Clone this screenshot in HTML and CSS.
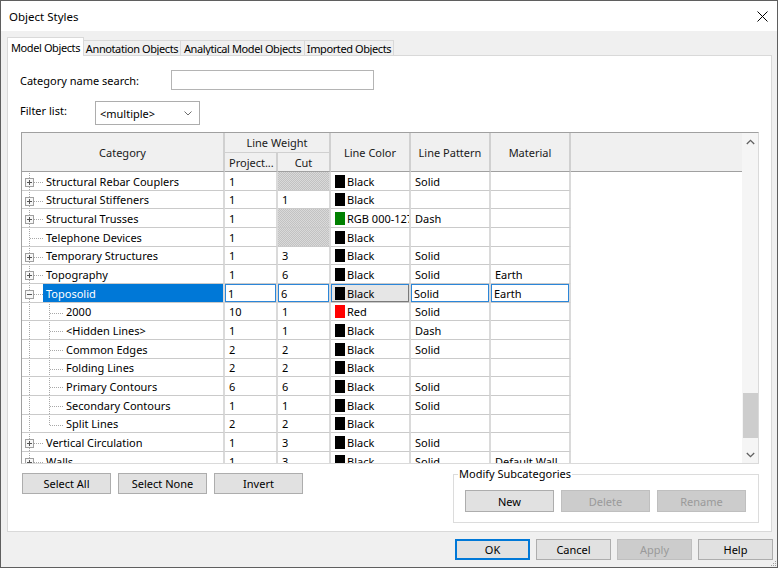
FILE: index.html
```html
<!DOCTYPE html>
<html>
<head>
<meta charset="utf-8">
<title>Object Styles</title>
<link rel="stylesheet" href="styles.css">
</head>
<body>
<div class="window">
  <div class="titlebar">
    <span class="title">Object Styles</span>
    <svg class="close" width="11" height="11" viewBox="0 0 11 11"><path d="M0.5 0.5L10.5 10.5M10.5 0.5L0.5 10.5" stroke="#000" stroke-width="1"/></svg>
  </div>
  <div class="tabs">
    <div class="tab active t1">Model Objects</div>
    <div class="tab t2">Annotation Objects</div>
    <div class="tab t3">Analytical Model Objects</div>
    <div class="tab t4">Imported Objects</div>
  </div>
  <div class="panel">
    <div class="frow search-row">
      <label class="lbl lbl-search">Category name search:</label>
      <div class="input"></div>
    </div>
    <div class="frow filter-row">
      <label class="lbl lbl-filter">Filter list:</label>
      <div class="select"><span>&lt;multiple&gt;</span><svg width="8" height="5" viewBox="0 0 8 5"><path d="M0.5 0.5L4 4L7.5 0.5" fill="none" stroke="#6d6d6d"/></svg></div>
    </div>
    <div class="grid">
      <div class="gmain">
        <div class="ghead">
          <div class="hc hc-cat">Category</div>
          <div class="hc hc-lw">Line Weight</div>
          <div class="hc hc-color">Line Color</div>
          <div class="hc hc-pat">Line Pattern</div>
          <div class="hc hc-mat">Material</div>
          <div class="hc hc-fill"></div>
          <div class="hc hc-proj">Project...</div>
          <div class="hc hc-cut">Cut</div>
        </div>
        <div class="gbody">
          <div class="row">
            <div class="c c-cat"><svg class="tw" width="21" height="19" viewBox="0 0 21 19"><path d="M7.5 0V19M12 9.5H21" stroke="#a8a8a8" stroke-dasharray="1 1"/><rect x="3.5" y="5.5" width="8" height="8" fill="#f7f7f7" stroke="#a0a0a0"/><path d="M5 9.5H10M7.5 7V12" stroke="#555"/></svg><span class="name">Structural Rebar Couplers</span></div>
            <div class="c">1</div><div class="c hatch"></div>
            <div class="c"><i class="sw"></i>Black</div><div class="c">Solid</div><div class="c"></div><div class="cf"></div>
          </div>
          <div class="row">
            <div class="c c-cat"><svg class="tw" width="21" height="19" viewBox="0 0 21 19"><path d="M7.5 0V19M12 9.5H21" stroke="#a8a8a8" stroke-dasharray="1 1"/><rect x="3.5" y="5.5" width="8" height="8" fill="#f7f7f7" stroke="#a0a0a0"/><path d="M5 9.5H10M7.5 7V12" stroke="#555"/></svg><span class="name">Structural Stiffeners</span></div>
            <div class="c">1</div><div class="c">1</div>
            <div class="c"><i class="sw"></i>Black</div><div class="c"></div><div class="c"></div><div class="cf"></div>
          </div>
          <div class="row">
            <div class="c c-cat"><svg class="tw" width="21" height="19" viewBox="0 0 21 19"><path d="M7.5 0V19M12 9.5H21" stroke="#a8a8a8" stroke-dasharray="1 1"/><rect x="3.5" y="5.5" width="8" height="8" fill="#f7f7f7" stroke="#a0a0a0"/><path d="M5 9.5H10M7.5 7V12" stroke="#555"/></svg><span class="name">Structural Trusses</span></div>
            <div class="c">1</div><div class="c hatch"></div>
            <div class="c"><i class="sw sw-green"></i><span class="clip">RGB 000-127-000</span></div><div class="c">Dash</div><div class="c"></div><div class="cf"></div>
          </div>
          <div class="row">
            <div class="c c-cat"><svg class="tw" width="21" height="19" viewBox="0 0 21 19"><path d="M7.5 0V19M8 9.5H21" stroke="#a8a8a8" stroke-dasharray="1 1"/></svg><span class="name">Telephone Devices</span></div>
            <div class="c">1</div><div class="c hatch"></div>
            <div class="c"><i class="sw"></i>Black</div><div class="c"></div><div class="c"></div><div class="cf"></div>
          </div>
          <div class="row">
            <div class="c c-cat"><svg class="tw" width="21" height="19" viewBox="0 0 21 19"><path d="M7.5 0V19M12 9.5H21" stroke="#a8a8a8" stroke-dasharray="1 1"/><rect x="3.5" y="5.5" width="8" height="8" fill="#f7f7f7" stroke="#a0a0a0"/><path d="M5 9.5H10M7.5 7V12" stroke="#555"/></svg><span class="name">Temporary Structures</span></div>
            <div class="c">1</div><div class="c">3</div>
            <div class="c"><i class="sw"></i>Black</div><div class="c">Solid</div><div class="c"></div><div class="cf"></div>
          </div>
          <div class="row">
            <div class="c c-cat"><svg class="tw" width="21" height="19" viewBox="0 0 21 19"><path d="M7.5 0V19M12 9.5H21" stroke="#a8a8a8" stroke-dasharray="1 1"/><rect x="3.5" y="5.5" width="8" height="8" fill="#f7f7f7" stroke="#a0a0a0"/><path d="M5 9.5H10M7.5 7V12" stroke="#555"/></svg><span class="name">Topography</span></div>
            <div class="c">1</div><div class="c">6</div>
            <div class="c"><i class="sw"></i>Black</div><div class="c">Solid</div><div class="c">Earth</div><div class="cf"></div>
          </div>
          <div class="row sel">
            <div class="c c-cat"><svg class="tw" width="21" height="19" viewBox="0 0 21 19"><path d="M7.5 0V19M12 9.5H21" stroke="#a8a8a8" stroke-dasharray="1 1"/><rect x="3.5" y="5.5" width="8" height="8" fill="#f7f7f7" stroke="#a0a0a0"/><path d="M5 9.5H10" stroke="#555"/></svg><span class="name">Toposolid</span></div>
            <div class="c blue">1</div><div class="c blue">6</div>
            <div class="c cur"><i class="sw"></i>Black</div><div class="c blue">Solid</div><div class="c blue">Earth</div><div class="cf"></div>
          </div>
          <div class="row">
            <div class="c c-cat"><svg class="tw" width="41" height="19" viewBox="0 0 41 19"><path d="M7.5 0V19M27.5 0V19M28 9.5H41" stroke="#a8a8a8" stroke-dasharray="1 1"/></svg><span class="name">2000</span></div>
            <div class="c">10</div><div class="c">1</div>
            <div class="c"><i class="sw sw-red"></i>Red</div><div class="c">Solid</div><div class="c"></div><div class="cf"></div>
          </div>
          <div class="row">
            <div class="c c-cat"><svg class="tw" width="41" height="19" viewBox="0 0 41 19"><path d="M7.5 0V19M27.5 0V19M28 9.5H41" stroke="#a8a8a8" stroke-dasharray="1 1"/></svg><span class="name">&lt;Hidden Lines&gt;</span></div>
            <div class="c">1</div><div class="c">1</div>
            <div class="c"><i class="sw"></i>Black</div><div class="c">Dash</div><div class="c"></div><div class="cf"></div>
          </div>
          <div class="row">
            <div class="c c-cat"><svg class="tw" width="41" height="19" viewBox="0 0 41 19"><path d="M7.5 0V19M27.5 0V19M28 9.5H41" stroke="#a8a8a8" stroke-dasharray="1 1"/></svg><span class="name">Common Edges</span></div>
            <div class="c">2</div><div class="c">2</div>
            <div class="c"><i class="sw"></i>Black</div><div class="c">Solid</div><div class="c"></div><div class="cf"></div>
          </div>
          <div class="row">
            <div class="c c-cat"><svg class="tw" width="41" height="19" viewBox="0 0 41 19"><path d="M7.5 0V19M27.5 0V19M28 9.5H41" stroke="#a8a8a8" stroke-dasharray="1 1"/></svg><span class="name">Folding Lines</span></div>
            <div class="c">2</div><div class="c">2</div>
            <div class="c"><i class="sw"></i>Black</div><div class="c"></div><div class="c"></div><div class="cf"></div>
          </div>
          <div class="row">
            <div class="c c-cat"><svg class="tw" width="41" height="19" viewBox="0 0 41 19"><path d="M7.5 0V19M27.5 0V19M28 9.5H41" stroke="#a8a8a8" stroke-dasharray="1 1"/></svg><span class="name">Primary Contours</span></div>
            <div class="c">6</div><div class="c">6</div>
            <div class="c"><i class="sw"></i>Black</div><div class="c">Solid</div><div class="c"></div><div class="cf"></div>
          </div>
          <div class="row">
            <div class="c c-cat"><svg class="tw" width="41" height="19" viewBox="0 0 41 19"><path d="M7.5 0V19M27.5 0V19M28 9.5H41" stroke="#a8a8a8" stroke-dasharray="1 1"/></svg><span class="name">Secondary Contours</span></div>
            <div class="c">1</div><div class="c">1</div>
            <div class="c"><i class="sw"></i>Black</div><div class="c">Solid</div><div class="c"></div><div class="cf"></div>
          </div>
          <div class="row">
            <div class="c c-cat"><svg class="tw" width="41" height="19" viewBox="0 0 41 19"><path d="M7.5 0V19M27.5 0V9.5M28 9.5H41" stroke="#a8a8a8" stroke-dasharray="1 1"/></svg><span class="name">Split Lines</span></div>
            <div class="c">2</div><div class="c">2</div>
            <div class="c"><i class="sw"></i>Black</div><div class="c"></div><div class="c"></div><div class="cf"></div>
          </div>
          <div class="row">
            <div class="c c-cat"><svg class="tw" width="21" height="19" viewBox="0 0 21 19"><path d="M7.5 0V19M12 9.5H21" stroke="#a8a8a8" stroke-dasharray="1 1"/><rect x="3.5" y="5.5" width="8" height="8" fill="#f7f7f7" stroke="#a0a0a0"/><path d="M5 9.5H10M7.5 7V12" stroke="#555"/></svg><span class="name">Vertical Circulation</span></div>
            <div class="c">1</div><div class="c">3</div>
            <div class="c"><i class="sw"></i>Black</div><div class="c">Solid</div><div class="c"></div><div class="cf"></div>
          </div>
          <div class="row">
            <div class="c c-cat"><svg class="tw" width="21" height="19" viewBox="0 0 21 19"><path d="M7.5 0V19M12 9.5H21" stroke="#a8a8a8" stroke-dasharray="1 1"/><rect x="3.5" y="5.5" width="8" height="8" fill="#f7f7f7" stroke="#a0a0a0"/><path d="M5 9.5H10M7.5 7V12" stroke="#555"/></svg><span class="name">Walls</span></div>
            <div class="c">1</div><div class="c">3</div>
            <div class="c"><i class="sw"></i>Black</div><div class="c">Solid</div><div class="c">Default Wall</div><div class="cf"></div>
          </div>
        </div>
      </div>
      <div class="vscroll">
        <div class="sbtn"><svg width="9" height="6" viewBox="0 0 9 6"><path d="M0.8 5L4.5 1.3L8.2 5" fill="none" stroke="#606060" stroke-width="1.3"/></svg></div>
        <div class="strack"><div class="thumb"></div></div>
        <div class="sbtn"><svg width="9" height="6" viewBox="0 0 9 6"><path d="M0.8 1L4.5 4.7L8.2 1" fill="none" stroke="#606060" stroke-width="1.3"/></svg></div>
      </div>
    </div>
    <div class="lower">
      <div class="selbtns">
        <button class="btn">Select All</button>
        <button class="btn">Select None</button>
        <button class="btn">Invert</button>
      </div>
      <fieldset class="modify">
        <legend>Modify Subcategories</legend>
        <div class="modbtns">
          <button class="btn btn-sub">New</button>
          <button class="btn btn-sub" disabled>Delete</button>
          <button class="btn btn-sub" disabled>Rename</button>
        </div>
      </fieldset>
    </div>
  </div>
  <div class="footer">
    <button class="btn fbtn ok">OK</button>
    <button class="btn fbtn">Cancel</button>
    <button class="btn fbtn" disabled>Apply</button>
    <button class="btn fbtn">Help</button>
  </div>
  <svg class="grip" width="7" height="7" viewBox="0 0 7 7"><rect x="5" y="1" width="1" height="1" fill="#a0a0a0"/><rect x="3" y="3" width="1" height="1" fill="#a0a0a0"/><rect x="5" y="3" width="1" height="1" fill="#a0a0a0"/><rect x="1" y="5" width="1" height="1" fill="#a0a0a0"/><rect x="3" y="5" width="1" height="1" fill="#a0a0a0"/><rect x="5" y="5" width="1" height="1" fill="#a0a0a0"/></svg>
</div>
</body>
</html>
```

FILE: styles.css
```css
* { box-sizing: border-box; }
html, body { margin: 0; padding: 0; }
body {
  width: 778px;
  height: 568px;
  overflow: hidden;
  font-family: "Noto Sans", "Open Sans", sans-serif;
  font-size: 11px;
  color: #000;
  background: #fff;
}
.window {
  width: 778px;
  height: 568px;
  border: 1px solid #5f5f5f;
  background: #f0f0f0;
  display: flex;
  flex-direction: column;
  position: relative;
}
.titlebar {
  height: 30px;
  flex: none;
  background: #fff;
  display: flex;
  align-items: center;
  justify-content: space-between;
  padding: 0 9px 0 8px;
  font-size: 11.5px;
}
.tabs {
  height: 24px;
  flex: none;
  display: flex;
  align-items: flex-end;
  padding-left: 6px;
}
.tab {
  height: 15px;
  border: 1px solid #d9d9d9;
  border-bottom: none;
  border-left: none;
  display: flex;
  align-items: center;
  justify-content: center;
  background: #f0f0f0;
  white-space: nowrap;
  letter-spacing: -0.4px;
  padding-top: 1px;
}
.tab.active {
  height: 19px;
  margin-bottom: -1px;
  background: #fff;
  position: relative;
  z-index: 1;
  border-left: 1px solid #d9d9d9;
  padding-top: 0;
}
.t1 { width: 77px; }
.t2 { width: 97px; }
.t3 { width: 124px; }
.t4 { width: 89px; }
.panel {
  flex: none;
  height: 477px;
  margin: 0 5px 0 6px;
  background: #fff;
  border: 1px solid #d9d9d9;
  padding: 0 12px 0 13px;
  display: flex;
  flex-direction: column;
}
.frow { display: flex; align-items: center; }
.search-row { margin-top: 14px; }
.filter-row { margin-top: 11px; }
.lbl { margin-left: -1px; }
.lbl-search { width: 151px; }
.lbl-filter { width: 75px; margin-bottom: 5px; }
.input {
  width: 203px;
  height: 20px;
  border: 1px solid #b4b4b4;
  background: #fff;
}
.select {
  width: 105px;
  height: 24px;
  border: 1px solid #adadad;
  background: #fff;
  display: flex;
  align-items: center;
  justify-content: space-between;
  padding: 0 7px 0 4px;
}
.grid {
  margin-top: 7px;
  height: 332px;
  border: 1px solid #a0a0a0;
  border-right-color: #dadada;
  border-bottom-color: #dadada;
  display: flex;
}
.gmain {
  width: 720px;
  display: flex;
  flex-direction: column;
  overflow: hidden;
}
.ghead {
  flex: none;
  display: grid;
  grid-template-columns: 203px 53px 53px 80px 80px 80px 171px;
  grid-template-rows: 20px 19px;
  background: #f0f0f0;
}
.hc {
  border-right: 2px solid #d0d0d0;
  border-bottom: 1px solid #a0a0a0;
  display: flex;
  align-items: center;
  justify-content: center;
  white-space: nowrap;
  overflow: hidden;
  color: #1a1a1a;
}
.hc-cat { grid-column: 1; grid-row: 1 / 3; }
.hc-lw { grid-column: 2 / 4; grid-row: 1; border-bottom-color: #d0d0d0; }
.hc-color { grid-column: 4; grid-row: 1 / 3; }
.hc-pat { grid-column: 5; grid-row: 1 / 3; }
.hc-mat { grid-column: 6; grid-row: 1 / 3; }
.hc-fill { grid-column: 7; grid-row: 1 / 3; border-right: none; }
.hc-proj { grid-column: 2; grid-row: 2; justify-content: flex-start; padding-left: 4px; }
.hc-cut { grid-column: 3; grid-row: 2; }
.gbody { flex: 1; overflow: hidden; background: #fff; }
.row {
  display: grid;
  grid-template-columns: 203px 53px 53px 80px 80px 80px 171px;
  height: 18.667px;
}
.c {
  border-right: 2px solid #dadada;
  border-bottom: 1px solid #cacaca;
  display: flex;
  align-items: center;
  padding-left: 4px;
  padding-top: 1px;
  white-space: nowrap;
  overflow: hidden;
  min-width: 0;
}
.c-cat { padding-left: 0; }
.tw { flex: none; align-self: flex-start; }
.name {
  flex: 1;
  align-self: stretch;
  display: flex;
  align-items: center;
  padding-left: 3px;
  margin-top: -1px;
  padding-top: 1px;
}
.clip { flex: 1; min-width: 0; overflow: hidden; white-space: nowrap; }
.sel .name { background: #0078d7; color: #fff; }
.sel .blue { box-shadow: inset 0 0 0 1px #2b86d9; padding-left: 3px; }
.sel .cur {
  background: #e6e6e6;
  box-shadow: inset 1px 1px 0 #2b86d9, inset -1px -1px 0 #7a7a7a;
}
.hatch {
  background: repeating-conic-gradient(#c2c2c2 0 25%, #dadada 0 50%) 0 0 / 2px 2px;
}
.sw {
  display: inline-block;
  width: 10px;
  height: 13px;
  background: #000;
  margin-right: 2px;
  flex: none;
}
.sw-green { background: #008000; }
.sw-red { background: #ff0000; }
.cf { background: #fff; }
.vscroll {
  width: 16px;
  background: #f5f5f5;
  display: flex;
  flex-direction: column;
}
.sbtn {
  height: 17px;
  flex: none;
  display: flex;
  align-items: center;
  justify-content: center;
}
.strack { flex: 1; }
.thumb {
  margin-top: 243px;
  height: 45px;
  margin-left: 1px;
  background: #cdcdcd;
}
.lower {
  display: flex;
  justify-content: space-between;
  align-items: flex-start;
  margin-top: 2px;
}
.selbtns {
  display: flex;
  gap: 7px;
  margin-top: 7px;
  margin-left: 1px;
}
.btn {
  width: 89px;
  height: 21px;
  background: #e1e1e1;
  border: 1px solid #adadad;
  font-family: inherit;
  font-size: 11px;
  color: #000;
  padding: 0;
  margin: 0;
}
.btn:disabled {
  background: #cccccc;
  border-color: #bfbfbf;
  color: #9a9a9a;
}
.modify {
  width: 306px;
  margin: 0;
  padding: 0 0 10px 11px;
  border: 1px solid #dcdcdc;
}
.modify legend {
  padding: 0 1px;
  margin-left: -7px;
  line-height: 16px;
}
.modbtns {
  display: flex;
  gap: 7px;
  margin-top: 8px;
}
.btn-sub { height: 22px; }
.footer {
  flex: 1;
  display: flex;
  justify-content: flex-end;
  align-items: flex-start;
  gap: 6px;
  padding: 7px 4px 0 0;
}
.fbtn { width: 75px; height: 21px; }
.ok { border: 2px solid #0078d7; }
.grip { position: absolute; right: 0; bottom: 0; }
```
